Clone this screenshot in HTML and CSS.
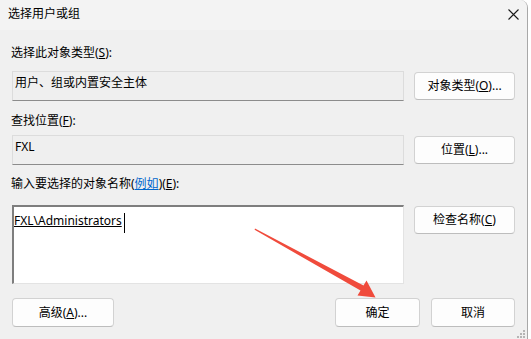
FILE: index.html
```html
<!doctype html>
<html lang="zh-CN">
  <head>
    <meta charset="utf-8">
    <title>选择用户或组</title>
    <link rel="stylesheet" href="styles.css">
  </head>
  <body>
    <div class="dialog">
      <div class="titlebar">
        <span class="title">选择用户或组</span>
        <svg class="close" width="11" height="11" viewBox="0 0 11 11">
          <path d="M0.5 0.5 L10.5 10.5 M10.5 0.5 L0.5 10.5" stroke="#1a1a1a" stroke-width="1.1" fill="none"/>
        </svg>
      </div>
      <div class="content">
        <div class="label l1">选择此对象类型(<u>S</u>):</div>
        <div class="row r1">
          <div class="field">用户、组或内置安全主体</div>
          <button class="btn">对象类型(<u>O</u>)...</button>
        </div>
        <div class="label l2">查找位置(<u>F</u>):</div>
        <div class="row r2">
          <div class="field">FXL</div>
          <button class="btn">位置(<u>L</u>)...</button>
        </div>
        <div class="label l3">输入要选择的对象名称(<a class="link" href="#">例如</a>)(<u>E</u>):</div>
        <div class="row r3">
          <div class="names"><u>FXL\Administrators</u><span class="caret"></span></div>
          <button class="btn">检查名称(<u>C</u>)</button>
        </div>
        <div class="footer">
          <button class="btn btn-adv">高级(<u>A</u>)...</button>
          <div class="spacer"></div>
          <button class="btn btn-ok">确定</button>
          <button class="btn btn-cancel">取消</button>
        </div>
      </div>
      <svg class="grip" width="8" height="8" viewBox="0 0 8 8">
        <rect x="6" y="0" width="2" height="2" fill="#b5b5b5"/>
        <rect x="3" y="3" width="2" height="2" fill="#b5b5b5"/>
        <rect x="6" y="3" width="2" height="2" fill="#b5b5b5"/>
        <rect x="0" y="6" width="2" height="2" fill="#b5b5b5"/>
        <rect x="3" y="6" width="2" height="2" fill="#b5b5b5"/>
        <rect x="6" y="6" width="2" height="2" fill="#b5b5b5"/>
      </svg>
    </div>
    <svg class="arrow" width="531" height="339" viewBox="0 0 531 339">
      <polygon points="255,228.6 363.5,285.4 366.5,280.5 375.5,297.5 357.5,295.5 360.5,290.6 254.6,229.8" fill="#f04b3c"/>
    </svg>
  </body>
</html>
```

FILE: styles.css
```css
html, body {
  margin: 0;
  padding: 0;
  background: #ffffff;
}
body {
  width: 531px;
  height: 339px;
  overflow: hidden;
  position: relative;
  font-family: "Noto Sans", "Noto Sans CJK SC", sans-serif;
  font-size: 12px;
  color: #000;
}
.dialog {
  position: relative;
  width: 528px;
  height: 339px;
  background: #f0f0f0;
  border-right: 1px solid #a8a8a8;
  border-top-right-radius: 8px;
  box-sizing: border-box;
  overflow: hidden;
}
.titlebar {
  height: 30px;
  background: #f3f3f3;
  display: flex;
  align-items: center;
  padding: 0 0 0 8px;
}
.title {
  flex: 1;
  line-height: 18px;
  margin-top: -3px;
}
.close {
  margin-right: 8px;
  margin-top: -2px;
}
.content {
  padding: 14px 12px 0 12px;
  display: flex;
  flex-direction: column;
}
.label {
  line-height: 18px;
  height: 18px;
  margin-left: -1px;
}
.l2 {
  margin-top: 11px;
}
.l3 {
  margin-top: 10px;
}
.link {
  color: #0066cc;
}
.row {
  display: flex;
  gap: 10px;
  align-items: flex-start;
}
.r1 {
  margin-top: 9px;
}
.r2 {
  margin-top: 5px;
}
.r3 {
  margin-top: 12px;
}
.field {
  width: 392px;
  height: 30px;
  box-sizing: border-box;
  background: #efefef;
  border: 1px solid #dcdcdc;
  border-bottom: 1px solid #8c8c8c;
  padding: 2px 2px 0 2px;
  line-height: 18px;
}
.btn {
  font-family: inherit;
  font-size: 12px;
  color: #000;
  width: 101px;
  height: 28px;
  margin-top: 1px;
  box-sizing: border-box;
  background: #fdfdfd;
  border: 1px solid #d2d2d2;
  border-bottom-color: #bdbdbd;
  border-radius: 4px;
  padding: 0;
  line-height: 18px;
}
.names {
  width: 392px;
  height: 79px;
  box-sizing: border-box;
  background: #ffffff;
  border-top: 2px solid #7e7e7e;
  border-left: 2px solid #7e7e7e;
  border-right: 1px solid #e3e3e3;
  border-bottom: 1px solid #e3e3e3;
  padding: 5px 0 0 0;
  line-height: 18px;
  display: flex;
  align-items: flex-start;
}
.caret {
  display: inline-block;
  width: 1px;
  height: 20px;
  background: #000;
  margin-top: 1px;
  margin-left: 2px;
}
.footer {
  display: flex;
  margin-top: 14px;
  gap: 11px;
}
.footer .btn {
  height: 29px;
  margin-top: 0;
}
.btn-adv {
  width: 102px;
}
.btn-ok {
  width: 85px;
}
.btn-cancel {
  width: 84px;
}
.spacer {
  flex: 1;
}
.grip {
  position: absolute;
  right: 2px;
  bottom: 1px;
}
.arrow {
  position: absolute;
  left: 0;
  top: 0;
  pointer-events: none;
}
```
